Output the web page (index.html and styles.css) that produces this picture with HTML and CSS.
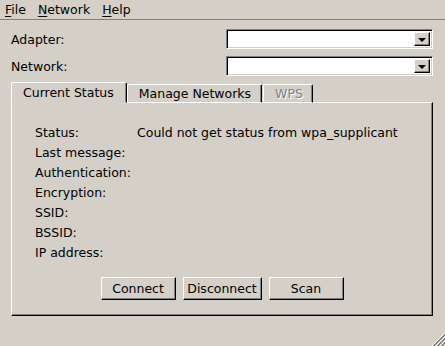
FILE: index.html
```html
<!DOCTYPE html>
<html>
<head>
<meta charset="utf-8">
<link rel="stylesheet" href="styles.css">
</head>
<body>
<div class="window">
  <div class="menubar">
    <span class="menu"><u>F</u>ile</span>
    <span class="menu"><u>N</u>etwork</span>
    <span class="menu"><u>H</u>elp</span>
  </div>
  <div class="form">
    <div class="form-row">
      <span class="label">Adapter:</span>
      <div class="combo"><div class="combo-field"></div><div class="combo-btn"><span class="arrow"></span></div></div>
    </div>
    <div class="form-row">
      <span class="label">Network:</span>
      <div class="combo"><div class="combo-field"></div><div class="combo-btn"><span class="arrow"></span></div></div>
    </div>
  </div>
  <div class="tabwidget">
    <div class="tabbar">
      <div class="tab selected">Current Status</div>
      <div class="tab">Manage Networks</div>
      <div class="tab disabled">WPS</div>
    </div>
    <div class="pane">
      <div class="status-grid">
        <span>Status:</span><span>Could not get status from wpa_supplicant</span>
        <span>Last message:</span><span></span>
        <span>Authentication:</span><span></span>
        <span>Encryption:</span><span></span>
        <span>SSID:</span><span></span>
        <span>BSSID:</span><span></span>
        <span>IP address:</span><span></span>
      </div>
      <div class="buttons">
        <button class="btn btn-connect">Connect</button>
        <button class="btn btn-disconnect">Disconnect</button>
        <button class="btn btn-scan">Scan</button>
      </div>
    </div>
  </div>
  <svg class="grip" width="14" height="14" viewBox="0 0 14 14">
    <g stroke-width="1">
      <line x1="14" y1="1" x2="1" y2="14" stroke="#ffffff"/>
      <line x1="14" y1="2" x2="2" y2="14" stroke="#808080"/>
      <line x1="14" y1="3" x2="3" y2="14" stroke="#808080"/>
      <line x1="14" y1="5" x2="5" y2="14" stroke="#ffffff"/>
      <line x1="14" y1="6" x2="6" y2="14" stroke="#808080"/>
      <line x1="14" y1="7" x2="7" y2="14" stroke="#808080"/>
      <line x1="14" y1="9" x2="9" y2="14" stroke="#ffffff"/>
      <line x1="14" y1="10" x2="10" y2="14" stroke="#808080"/>
      <line x1="14" y1="11" x2="11" y2="14" stroke="#808080"/>
    </g>
  </svg>
</div>
</body>
</html>
```
FILE: styles.css
```css
* { box-sizing: border-box; }
html, body {
  margin: 0;
  padding: 0;
  background: #d4d0c8;
}
body {
  font-family: "DejaVu Sans", sans-serif;
  font-size: 12.5px;
  color: #000;
}
.window {
  position: relative;
  width: 445px;
  height: 346px;
  overflow: hidden;
}
.menubar {
  height: 20px;
  display: flex;
  align-items: center;
  gap: 12px;
  padding-left: 5px;
  padding-top: 0;
  border-bottom: 1px solid #808080;
}
.menu u { text-decoration: underline; text-underline-offset: 2px; }

.form {
  padding: 9px 12px 0 11px;
  display: flex;
  flex-direction: column;
  gap: 7px;
}
.form-row {
  height: 20px;
  display: flex;
  align-items: center;
  justify-content: space-between;
}
.combo {
  width: 207px;
  height: 20px;
  display: flex;
  background: #fff;
  border-top: 1px solid #808080;
  border-left: 1px solid #808080;
  border-bottom: 1px solid #fff;
  border-right: 1px solid #fff;
  box-shadow: inset 1px 1px 0 #000, inset -1px -1px 0 #d4d0c8;
  padding: 2px;
}
.combo-field { flex: 1; }
.combo-btn {
  width: 16px;
  height: 14px;
  background: #d4d0c8;
  border-top: 1px solid #fff;
  border-left: 1px solid #fff;
  border-right: 1px solid #000;
  border-bottom: 1px solid #000;
  box-shadow: inset -1px -1px 0 #808080;
  display: flex;
  align-items: center;
  justify-content: center;
}
.arrow {
  width: 0;
  height: 0;
  border-left: 4px solid transparent;
  border-right: 4px solid transparent;
  border-top: 4px solid #000;
  margin-top: 1px;
}

.tabwidget {
  margin: 6px 12px 0 11px;
}
.tabbar {
  display: flex;
  align-items: flex-end;
  height: 21px;
  padding-left: 1px;
  position: relative;
  z-index: 1;
  margin-bottom: -1px;
}
.tab {
  height: 19px;
  padding: 0 10px 0 11px;
  display: flex;
  align-items: center;
  border-top: 1px solid #fff;
  border-left: 1px solid #fff;
  border-right: 1px solid #000;
  box-shadow: inset -1px 0 0 #808080;
  border-radius: 2px 2px 0 0;
  background: #d4d0c8;
  margin-right: 1px;
  border-bottom: 1px solid #fff;
}
.tab.selected {
  height: 21px;
  padding: 0 12px 1px 11px;
  border-bottom: 1px solid #d4d0c8;
  margin-left: -1px;
  margin-right: 0;
}
.tab.disabled {
  color: #808080;
  text-shadow: 1px 1px 0 #fff;
  padding: 0 9px 0 11px;
  margin-left: 0;
}
.pane {
  height: 214px;
  border-top: 1px solid #fff;
  border-left: 1px solid #fff;
  border-right: 1px solid #000;
  border-bottom: 1px solid #000;
  box-shadow: inset -1px -1px 0 #808080;
  padding: 19px 0 0 23px;
  display: flex;
  flex-direction: column;
}
.status-grid {
  display: grid;
  grid-template-columns: 102px auto;
  grid-auto-rows: 20px;
  align-items: center;
}
.buttons {
  display: flex;
  justify-content: center;
  gap: 7px;
  margin-top: 15px;
  margin-left: -23px;
}
.btn {
  font-family: "DejaVu Sans", sans-serif;
  font-size: 12.5px;
  color: #000;
  height: 23px;
  background: #d4d0c8;
  border-top: 1px solid #fff;
  border-left: 1px solid #fff;
  border-right: 1px solid #000;
  border-bottom: 1px solid #000;
  box-shadow: inset -1px -1px 0 #808080;
  padding: 0;
  margin: 0;
}
.btn-connect { width: 75px; }
.btn-disconnect { width: 79px; }
.btn-scan { width: 75px; }
.grip {
  position: absolute;
  right: 0;
  bottom: 0;
}
```
